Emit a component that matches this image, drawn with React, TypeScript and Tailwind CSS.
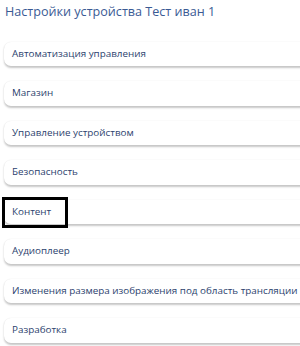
const SECTIONS = [
  'Автоматизация управления',
  'Магазин',
  'Управление устройством',
  'Безопасность',
  'Контент',
  'Аудиоплеер',
  'Изменения размера изображения под область трансляции',
  'Разработка',
]

export default function App() {
  return (
    <div
      className="w-[300px] h-[346px] overflow-hidden bg-white"
      style={{ fontFamily: "'Open Sans', 'Noto Sans', sans-serif" }}
    >
      <h1 className="pl-[5px] pt-[3px] text-[12.6px] leading-[17px] text-[#3a5a94] font-normal">
        Настройки устройства Тест иван 1
      </h1>

      <div className="w-[340px] pl-[4px] pt-[21.5px] flex flex-col gap-[15px]">
        {SECTIONS.map(s => (
          <div
            key={s}
            className="relative h-[24.5px] flex items-center bg-white rounded-[7px] shadow-[0_1.5px_2px_rgba(0,0,0,0.22),0_0_1px_rgba(0,0,0,0.06)]"
          >
            <span className="pl-[8px] text-[9.85px] leading-none whitespace-nowrap text-[#2c3f6e]">{s}</span>
            {s === 'Контент' && (
              <span className="absolute left-[-2px] top-[-3px] w-[66px] h-[31px] border-[3px] border-black" />
            )}
          </div>
        ))}
      </div>
    </div>
  )
}
